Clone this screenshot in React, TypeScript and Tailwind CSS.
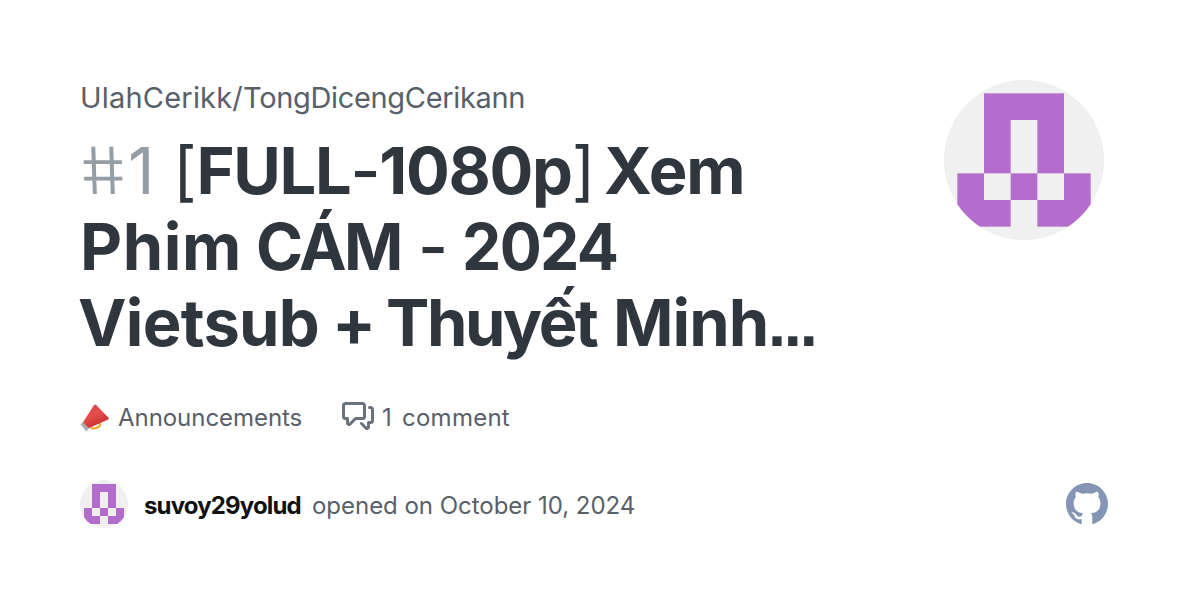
const cells = [
  [1, 0, 3, 1],
  [1, 1, 1, 2],
  [3, 1, 1, 2],
  [0, 3, 1, 1],
  [2, 3, 1, 1],
  [4, 3, 1, 1],
  [0, 4, 2, 1],
  [3, 4, 2, 1],
];

function Avatar({ className }: { className: string }) {
  return (
    <svg viewBox="0 0 12 12" className={`shrink-0 rounded-full bg-[#f0f0f0] ${className}`}>
      {cells.map(([x, y, w, h]) => (
        <rect key={`${x}-${y}`} x={1 + x * 2} y={1 + y * 2} width={w * 2} height={h * 2} fill="#b46dcc" />
      ))}
    </svg>
  );
}

function Megaphone() {
  return (
    <svg viewBox="2.2 3.2 27 27" className="mt-0.5 size-[30px] shrink-0">
      <defs>
        <linearGradient id="horn" x1="0" y1="0" x2="0.5" y2="1">
          <stop offset="0" stopColor="#d93f3f" />
          <stop offset="0.5" stopColor="#e5504c" />
          <stop offset="1" stopColor="#c92b30" />
        </linearGradient>
      </defs>
      <path d="M12 24.600c1.500 1.600 7.500-.3 8.200-2.200.3-1-.7-2-1.700-2.600" fill="none" stroke="#f5a623" strokeWidth="1.800" />
      <path d="M15 3.900c.8-.5 1.800.2 3 1.500l9.300 9.600c.9 1 1.100 1.600.2 2.100L9.500 25.200l-5-4.800z" fill="url(#horn)" />
      <path d="M2.700 21.400l2.200-1.700 5.200 5.200-2 3.200z" fill="#a9adb2" />
    </svg>
  );
}

function CommentIcon() {
  return (
    <svg viewBox="0 0 16 16" className="size-8 shrink-0 fill-[#6a737d]">
      <path d="M1.750 1h8.500c.966 0 1.750.784 1.750 1.750v5.500A1.750 1.750 0 0 1 10.250 10H7.061l-2.574 2.573A1.458 1.458 0 0 1 2 11.543V10h-.250A1.750 1.750 0 0 1 0 8.250v-5.500C0 1.784.784 1 1.750 1ZM1.500 2.750v5.500c0 .138.112.25.25.25h1a.75.75 0 0 1 .75.75v2.190l2.720-2.720a.749.749 0 0 1 .53-.22h3.500a.25.25 0 0 0 .25-.25v-5.500a.25.25 0 0 0-.25-.25h-8.500a.25.25 0 0 0-.25.25Zm13 2a.25.25 0 0 0-.25-.25h-.5a.75.75 0 0 1 0-1.500h.5c.966 0 1.750.784 1.750 1.750v5.500A1.750 1.750 0 0 1 14.250 12H14v1.543a1.458 1.458 0 0 1-2.487 1.030L9.220 12.280a.749.749 0 0 1 .326-1.275.749.749 0 0 1 .734.215l2.220 2.220v-2.190a.75.75 0 0 1 .75-.75h1a.25.25 0 0 0 .25-.25Z" />
    </svg>
  );
}

function GithubMark() {
  return (
    <svg viewBox="0 0 16 16" className="size-[42px] fill-[#8595b5]">
      <path d="M8 0C3.58 0 0 3.58 0 8c0 3.54 2.29 6.53 5.470 7.590.4.070.55-.17.55-.38 0-.19-.010-.82-.010-1.490-2.010.37-2.530-.49-2.690-.94-.090-.23-.48-.94-.82-1.130-.28-.15-.68-.52-.010-.53.63-.010 1.080.58 1.230.82.72 1.210 1.870.87 2.330.66.070-.52.28-.87.51-1.070-1.780-.2-3.640-.89-3.640-3.950 0-.87.31-1.590.82-2.150-.080-.2-.36-1.020.080-2.120 0 0 .67-.21 2.200.82.64-.18 1.320-.27 2-.27s1.360.090 2 .27c1.530-1.040 2.200-.82 2.200-.82.44 1.100.16 1.920.080 2.120.51.56.82 1.270.82 2.150 0 3.070-1.870 3.750-3.650 3.950.29.25.54.73.54 1.480 0 1.070-.010 1.930-.010 2.200 0 .21.15.46.55.38A8.010 8.010 0 0 0 16 8c0-4.420-3.580-8-8-8z" />
    </svg>
  );
}

function Title() {
  return (
    <h1 className="mt-[17px] text-[65px] leading-[76px] font-bold whitespace-nowrap text-[#2f363d]">
      <div className="flex">
        <span className="w-[46px] shrink-0 origin-left translate-x-px scale-x-[1.080] skew-x-[11deg] font-light text-[#959da5]">
          #
        </span>
        <span className="ml-0.5 w-[43px] font-normal text-[#959da5]">1</span>
        <span className="w-[433px] tracking-[-1.300px]">
          <span className="mr-px ml-0.5 font-normal">[</span>FULL<span className="font-medium">-</span>1080p
          <span className="font-normal">]</span>
        </span>
        <span className="tracking-[-1.300px]">Xem</span>
      </div>
      <div className="flex">
        <span className="w-[176px] tracking-[0.600px]">Phim</span>
        <span className="w-[162px] origin-left scale-x-[0.980] tracking-[-2.500px]">CÁM</span>
        <span className="w-[44px] font-medium">-</span>
        <span className="origin-left scale-x-[0.960] tracking-[-1.700px]">2024</span>
      </div>
      <div className="flex">
        <span className="-ml-0.5 w-[254px] tracking-[-0.700px]">Vietsub</span>
        <span className="w-[54px]">+</span>
        <span className="w-[227px] tracking-[-2.400px]">Thuyết</span>
        <span className="tracking-[-1px]">
          Minh<span className="font-['Liberation_Sans'] tracking-[-2.300px]">...</span>
        </span>
      </div>
    </h1>
  );
}

export default function App() {
  return (
    <main className="flex h-[600px] w-[1200px] flex-col bg-white px-20 pt-20 font-['Inter','Liberation_Sans',sans-serif] text-[#586069]">
      <div className="flex h-[320px] justify-between">
        <div>
          <p className="h-9 text-[29px] leading-9 tracking-[-0.330px]">
            <span className="tracking-[0.200px]">UlahCerikk/</span>TongDicengCerikann
          </p>
          <Title />
        </div>
        <Avatar className="mr-4 size-40" />
      </div>
      <div className="flex h-9 items-center text-2xl">
        <Megaphone />
        <span className="ml-2 w-[224px] tracking-[-0.050px]">Announcements</span>
        <div className="h-9">
          <CommentIcon />
        </div>
        <span className="ml-2 tracking-[0.250px] [word-spacing:3px]">1 comment</span>
      </div>
      <div className="mt-11 flex h-12 items-center text-2xl">
        <Avatar className="size-12" />
        <span className="mt-1 ml-4 w-[168px] font-bold tracking-[-0.850px] text-[#111]">suvoy29yolud</span>
        <span className="mt-1 tracking-[-0.030px]">opened on October 10, 2024</span>
        <span className="mr-3 ml-auto">
          <GithubMark />
        </span>
      </div>
    </main>
  );
}
